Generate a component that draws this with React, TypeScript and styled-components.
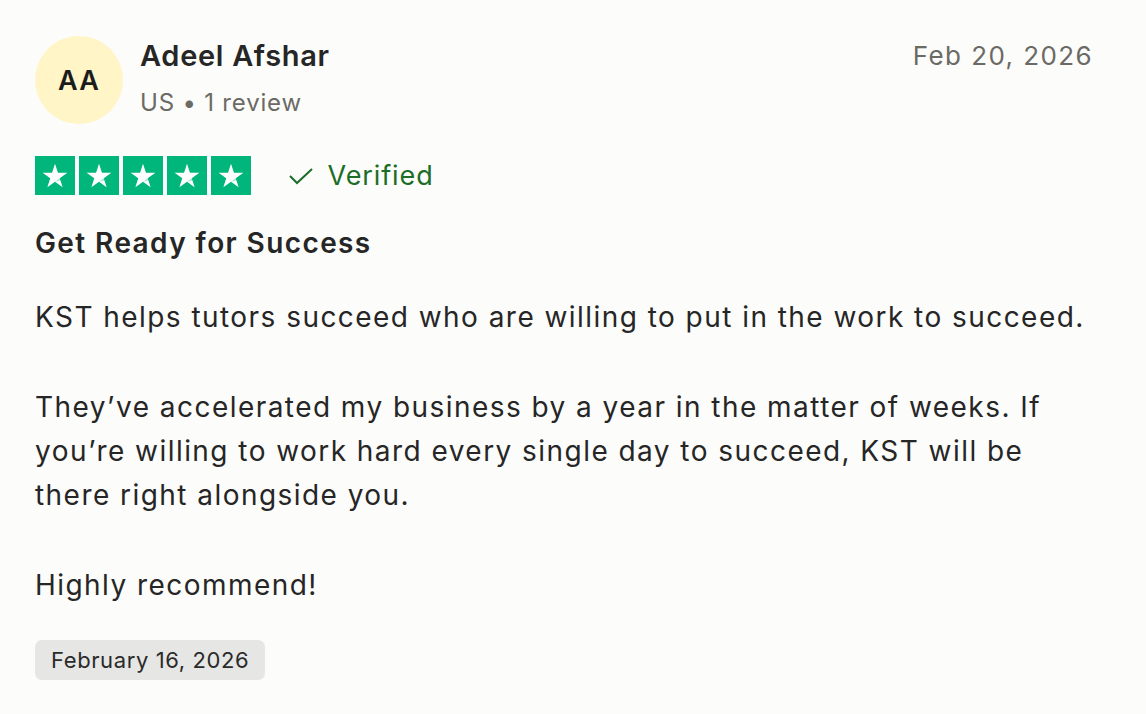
import React from "react";
import styled, { createGlobalStyle } from "styled-components";

const Global = createGlobalStyle`
  html, body { margin: 0; padding: 0; background: #fcfcfb; }
  body { font-family: Inter, "Noto Sans", Arial, sans-serif; color: #262626; }
`;

const Card = styled.article`
  width: 1146px;
  height: 714px;
  box-sizing: border-box;
  padding: 36px 53px 0 35px;
  background: #fcfcfb;
  display: flex;
  flex-direction: column;
`;

const Header = styled.header`
  display: flex;
  align-items: flex-start;
`;

const Avatar = styled.div`
  width: 88px;
  height: 88px;
  border-radius: 50%;
  background: #fff5c6;
  display: flex;
  align-items: center;
  justify-content: center;
  font-size: 27px;
  font-weight: 600;
  letter-spacing: 1.2px;
  color: #1c1c1c;
  flex-shrink: 0;
`;

const Who = styled.div`
  margin-left: 17px;
  display: flex;
  flex-direction: column;
  flex: 1;
`;

const Name = styled.div`
  font-size: 29px;
  font-weight: 600;
  line-height: 40px;
  letter-spacing: 0.7px;
  color: #262626;
`;

const Meta = styled.div`
  margin-top: 11px;
  font-size: 24px;
  line-height: 32px;
  letter-spacing: 0.8px;
  color: #6b6a64;
`;

const DateTop = styled.time`
  font-size: 26px;
  line-height: 40px;
  color: #6b6a64;
  letter-spacing: 1.4px;
`;

const RatingRow = styled.div`
  margin-top: 32px;
  display: flex;
  align-items: center;
`;

const Stars = styled.div`
  display: flex;
  gap: 4.5px;
`;

const StarBox = styled.div`
  width: 39.5px;
  height: 39px;
  background: #00b67a;
  display: flex;
  align-items: center;
  justify-content: center;
`;

const Verified = styled.div`
  margin-left: 37px;
  display: flex;
  align-items: center;
  gap: 14px;
  font-size: 27px;
  letter-spacing: 0.9px;
  color: #1c6d28;
`;

const Title = styled.h2`
  margin: 28px 0 0;
  font-size: 28px;
  line-height: 40px;
  font-weight: 600;
  letter-spacing: 1.4px;
  color: #262626;
`;

const Body = styled.div`
  margin-top: 32px;
  font-size: 28px;
  line-height: 44px;
  letter-spacing: 1.45px;
  color: #262626;
`;

const Para = styled.p`
  margin: 0 0 46px;
  &:last-child { margin-bottom: 0; }
`;

const Pill = styled.div`
  margin-top: 33px;
  align-self: flex-start;
  background: #e6e6e4;
  border-radius: 7px;
  padding: 0 16px;
  height: 40px;
  display: flex;
  align-items: center;
  font-size: 22px;
  letter-spacing: 0.6px;
  color: #2a2a2a;
`;

const Star = () => (
  <svg width="30" height="30" viewBox="0 0 24 24">
    <path
      fill="#fff"
      d="M12 2.2l2.35 7.2h7.55l-6.1 4.45 2.3 7.2L12 16.6l-6.1 4.45 2.3-7.2L2.1 9.4h7.55z"
    />
    <path fill="#00b67a" opacity="0.35" d="M15.8 13.85l0.55 1.7L12 16.6z" />
  </svg>
);

const Check = () => (
  <svg width="26" height="18" viewBox="0 0 26 18">
    <path d="M2 9l7 7L24 2" fill="none" stroke="#1c6d28" strokeWidth="2" />
  </svg>
);

export default function App() {
  return (
    <>
      <Global />
      <Card>
        <Header>
          <Avatar>AA</Avatar>
          <Who>
            <Name>Adeel Afshar</Name>
            <Meta>US • 1 review</Meta>
          </Who>
          <DateTop>Feb 20, 2026</DateTop>
        </Header>
        <RatingRow>
          <Stars>
            {[0, 1, 2, 3, 4].map((i) => (
              <StarBox key={i}>
                <Star />
              </StarBox>
            ))}
          </Stars>
          <Verified>
            <Check />
            Verified
          </Verified>
        </RatingRow>
        <Title>Get Ready for Success</Title>
        <Body>
          <Para>KST helps tutors succeed who are willing to put in the work to succeed.</Para>
          <Para>
            They’ve accelerated my business by a year in the matter of weeks. If you’re willing to
            work hard every single day to succeed, KST will be there right alongside you.
          </Para>
          <Para>Highly recommend!</Para>
        </Body>
        <Pill>February 16, 2026</Pill>
      </Card>
    </>
  );
}
